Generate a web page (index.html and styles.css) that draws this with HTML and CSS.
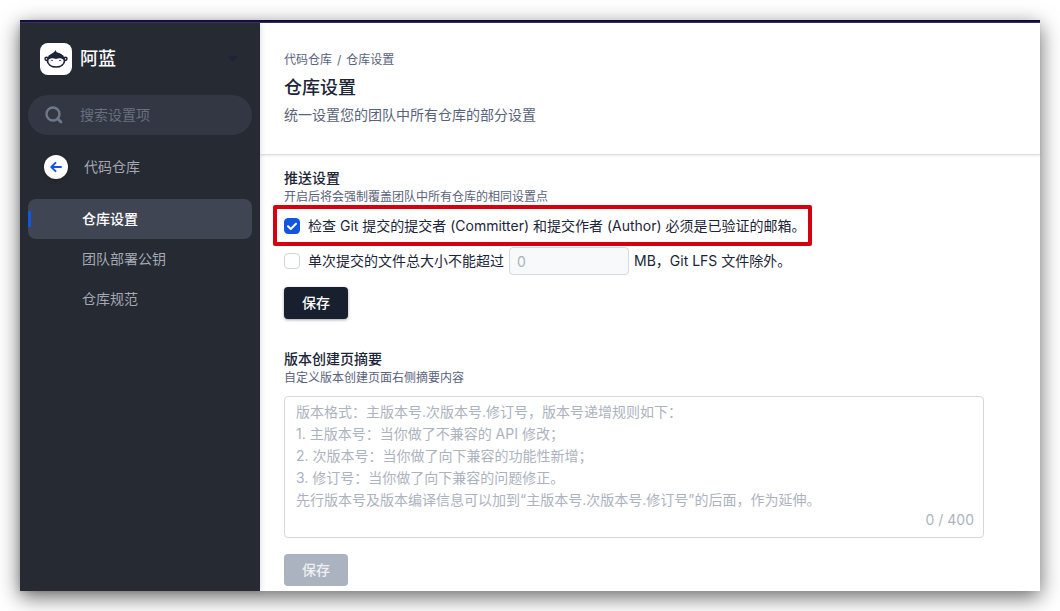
FILE: index.html
```html
<!DOCTYPE html>
<html lang="zh-CN">
<head>
  <meta charset="UTF-8">
  <meta name="viewport" content="width=device-width, initial-scale=1.0">
  <title>仓库设置</title>
  <link rel="stylesheet" href="styles.css">
</head>
<body>

  <div class="window">
    <div class="topbar"></div>

    <div class="layout">
      <!-- 侧边栏 -->
      <aside class="sidebar">
        <div class="team">
          <span class="team-logo">
            <svg width="24" height="24" viewBox="0 0 24 24" aria-hidden="true">
              <circle cx="2.6" cy="11.8" r="1.6" fill="none" stroke="#1b2537" stroke-width="1.5"/>
              <circle cx="21.4" cy="11.8" r="1.6" fill="none" stroke="#1b2537" stroke-width="1.5"/>
              <ellipse cx="12" cy="13.4" rx="9.4" ry="7.400" fill="#1b2537"/>
              <path d="M5 9C7.500 6.200 10.400 5.600 11.600 3.200 12.300 3.600 12.200 4.400 12.600 5.200 15 5.600 17.400 6.800 19 9z" fill="#1b2537"/>
              <path d="M4.600 12.800C6 10.800 9.600 10.800 12 12 14.400 10.800 18 10.800 19.400 12.800 20.400 16.400 17 19.300 12 19.300S3.600 16.400 4.600 12.800z" fill="#fff"/>
              <path d="M6.800 13.600Q7.900 12.800 9 13.600M15 13.600Q16.100 12.800 17.200 13.600" fill="none" stroke="#1b2537" stroke-width="0.800"/>
            </svg>
          </span>
          <span class="team-name">阿蓝</span>
          <svg class="caret" width="10" height="6" viewBox="0 0 10 6" aria-hidden="true"><path d="M1 0h8q1 0 .4.9L6 5q-1 1-2 0L.6.9Q0 0 1 0z" fill="#1b2537"/></svg>
        </div>

        <div class="search">
          <svg width="18" height="18" viewBox="0 0 18 18" aria-hidden="true">
            <circle cx="8" cy="8" r="6.500" fill="none" stroke="#6f788a" stroke-width="2.400"/>
            <path d="M12.700 12.700L16 16" stroke="#6f788a" stroke-width="2.800" stroke-linecap="round"/>
          </svg>
          <input type="text" placeholder="搜索设置项" aria-label="搜索设置项">
        </div>

        <a href="#" class="back">
          <span class="back-icon">
            <svg width="12" height="12" viewBox="0 0 12 12" aria-hidden="true"><path d="M11 6H1.500M5.500 1.800L1.300 6l4.200 4.200" fill="none" stroke="#1155e0" stroke-width="1.900" stroke-linecap="round" stroke-linejoin="round"/></svg>
          </span>
          代码仓库
        </a>

        <nav class="menu">
          <a href="#" class="active">仓库设置</a>
          <a href="#">团队部署公钥</a>
          <a href="#">仓库规范</a>
        </nav>
      </aside>

      <!-- 主内容 -->
      <main class="main">
        <header class="page-header">
          <div class="breadcrumb"><a href="#">代码仓库</a><span>/</span><span>仓库设置</span></div>
          <h1>仓库设置</h1>
          <p>统一设置您的团队中所有仓库的部分设置</p>
        </header>

        <form class="section">
          <h2>推送设置</h2>
          <p class="hint">开启后将会强制覆盖团队中所有仓库的相同设置点</p>

          <div class="option highlight">
            <input type="checkbox" id="verified-email" checked>
            <label for="verified-email">检查 Git 提交的提交者 (Committer) 和提交作者 (Author) 必须是已验证的邮箱。</label>
          </div>

          <div class="option option-size">
            <input type="checkbox" id="size-limit">
            <label for="size-limit">单次提交的文件总大小不能超过</label>
            <input type="text" class="size-input" placeholder="0" aria-label="文件总大小 (MB)" disabled>
            <span>MB，Git LFS 文件除外。</span>
          </div>

          <button type="button" class="btn">保存</button>
        </form>

        <form class="section section-summary">
          <h2><label for="summary">版本创建页摘要</label></h2>
          <p class="hint">自定义版本创建页面右侧摘要内容</p>

          <div class="summary-box">
            <textarea id="summary" maxlength="400" placeholder="版本格式：主版本号.次版本号.修订号，版本号递增规则如下：&#10;1. 主版本号：当你做了不兼容的 API 修改；&#10;2. 次版本号：当你做了向下兼容的功能性新增；&#10;3. 修订号：当你做了向下兼容的问题修正。&#10;先行版本号及版本编译信息可以加到“主版本号.次版本号.修订号”的后面，作为延伸。"></textarea>
            <span class="counter">0 / 400</span>
          </div>

          <button type="button" class="btn" disabled>保存</button>
        </form>
      </main>
    </div>
  </div>

</body>
</html>
```
FILE: styles.css
```css
* {
  box-sizing: border-box;
  margin: 0;
  padding: 0;
}

body {
  font-family: Inter, "Noto Sans CJK SC", sans-serif;
  font-size: 14px;
  line-height: 20px;
  color: #1b2537;
  background: #fff;
  padding: 20px;
}

a {
  color: inherit;
  text-decoration: none;
}

input,
textarea,
button {
  font: inherit;
}

.window {
  display: flex;
  flex-direction: column;
  min-height: calc(100vh - 40px);
  background: #fff;
  box-shadow: 0 6px 20px rgba(0, 0, 0, 0.6);
}

.topbar {
  height: 3px;
  background: #140b3c;
  border-bottom: 1px solid #39345c;
}

.layout {
  display: flex;
  flex: 1;
}

/* 侧边栏 */
.sidebar {
  width: 240px;
  flex-shrink: 0;
  padding: 20px 8px;
  background: #262a32;
  color: #a3a8b4;
  box-shadow: 0 0 6px rgba(40, 50, 90, 0.2);
}

.team {
  display: flex;
  align-items: center;
  gap: 8px;
  padding: 0 14px 0 12px;
}

.team-logo {
  display: flex;
  align-items: center;
  justify-content: center;
  width: 32px;
  height: 32px;
  border-radius: 8px;
  background: #fff;
}

.team-name {
  flex: 1;
  font-size: 18px;
  font-weight: 500;
  color: #fff;
}

.search {
  display: flex;
  align-items: center;
  gap: 17px;
  height: 40px;
  margin-top: 20px;
  padding: 0 17px;
  border-radius: 20px;
  background: #323743;
}

.search svg {
  flex-shrink: 0;
}

.search input {
  flex: 1;
  min-width: 0;
  border: none;
  outline: none;
  background: none;
  color: #fff;
}

.search input::placeholder {
  color: #687080;
}

.back {
  display: flex;
  align-items: center;
  gap: 16px;
  height: 40px;
  margin: 12px 0;
  padding: 0 16px;
}

.back-icon {
  display: flex;
  align-items: center;
  justify-content: center;
  width: 24px;
  height: 24px;
  border-radius: 50%;
  background: #fff;
  box-shadow: 0 2px 4px rgba(0, 0, 0, 0.2);
}

.menu a {
  display: block;
  padding: 10px 0 10px 54px;
  border-radius: 8px;
}

.menu .active {
  background: linear-gradient(#1155e0, #1155e0) left center / 3px 16px no-repeat #404553;
  color: #fff;
  font-weight: 500;
}

/* 主内容 */
.main {
  flex: 1;
  min-width: 0;
}

.page-header {
  display: flex;
  flex-direction: column;
  gap: 4px;
  padding: 27px 24px 29px;
  border-bottom: 1px solid #dadbe4;
  box-shadow: 0 1px 2px rgba(40, 50, 90, 0.1);
  color: #59627a;
}

.breadcrumb {
  display: flex;
  gap: 5px;
  font-size: 12px;
}

h1 {
  font-size: 18px;
  line-height: 27px;
  font-weight: 500;
  color: #1b2537;
}

.section {
  padding: 13px 24px 0;
}

h2 {
  font-size: 14px;
  line-height: 20px;
  font-weight: 500;
}

.hint {
  font-size: 12px;
  line-height: 18px;
  color: #59627a;
}

.option {
  display: flex;
  align-items: center;
  width: fit-content;
}

.option input[type="checkbox"] {
  appearance: none;
  width: 16px;
  height: 16px;
  margin-right: 8px;
  border: 1px solid #d0d4dc;
  border-radius: 4px;
  background: #fff;
}

.option input[type="checkbox"]:checked {
  border-color: #1155e0;
  background: #1155e0 url("data:image/svg+xml,%3Csvg xmlns='http://www.w3.org/2000/svg' viewBox='0 0 14 14'%3E%3Cpath d='M3 7.300l2.800 2.700L11 4.800' fill='none' stroke='white' stroke-width='2' stroke-linecap='round' stroke-linejoin='round'/%3E%3C/svg%3E") center no-repeat;
}

.highlight {
  position: relative;
  margin: 10px 0 11px;
}

.highlight::after {
  content: "";
  position: absolute;
  inset: -11px -6px -10px -11px;
  border: 4px solid #d7000f;
  border-radius: 2px;
  pointer-events: none;
}

.size-input {
  width: 120px;
  height: 28px;
  margin: 0 5px;
  padding: 0 7px;
  border: 1px solid #d6d9e0;
  border-radius: 4px;
  background: #f8f9fb;
}

.size-input::placeholder,
.summary-box textarea::placeholder {
  color: #acb3c0;
}

.btn {
  display: block;
  width: 64px;
  height: 32px;
  margin-top: 12px;
  border: none;
  border-radius: 4px;
  background: #182030;
  color: #fff;
  font-weight: 500;
  box-shadow: 0 1px 3px rgba(24, 32, 48, 0.4);
  cursor: pointer;
}

.btn:disabled {
  background: #acb3c0;
  color: #eef0f3;
  box-shadow: none;
  cursor: default;
}

.section-summary {
  padding: 30px 56px 5px 24px;
}

.section-summary .btn {
  margin-top: 16px;
}

.summary-box {
  position: relative;
  margin-top: 9px;
}

.summary-box textarea {
  display: block;
  width: 100%;
  height: 142px;
  padding: 4px 11px;
  border: 1px solid #d6d7dc;
  border-radius: 4px;
  outline: none;
  resize: none;
  line-height: 22px;
  color: #1b2537;
}

.counter {
  position: absolute;
  right: 10px;
  bottom: 8px;
  color: #acb3c0;
}
```
